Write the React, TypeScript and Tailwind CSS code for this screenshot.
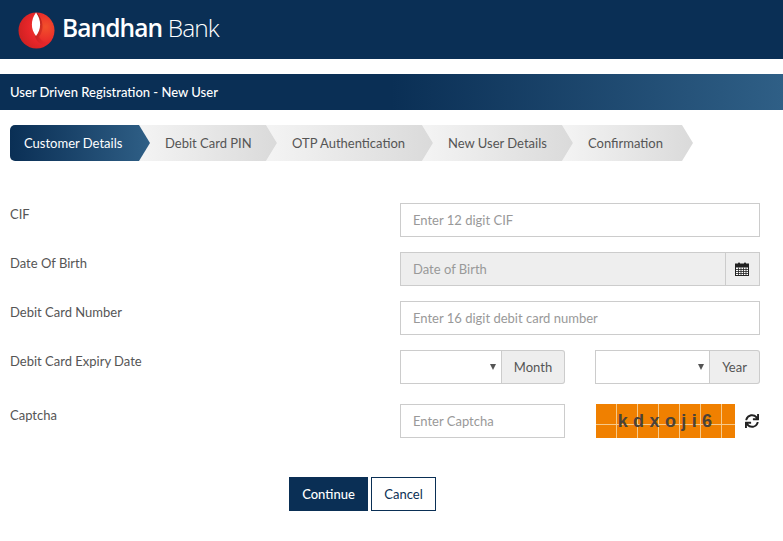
import React from "react";
import { FaSync } from "react-icons/fa";

const font = "font-['Lato','Noto_Sans',sans-serif]";

const steps = [
  { label: "Customer Details", w: "w-[140px]", cls: "pl-[14px] text-white bg-gradient-to-r from-[#0a2f55] to-[#2f5f86] rounded-l-[5px] z-50 [clip-path:polygon(0_0,129px_0,100%_50%,129px_100%,0_100%)]" },
  { label: "Debit Card PIN", w: "w-[138px]", cls: "pl-[26px] text-[#555] bg-gradient-to-r from-[#f4f4f4] to-[#dadada] z-40 [clip-path:polygon(0_0,127px_0,100%_50%,127px_100%,0_100%,11px_50%)] -ml-[11px]" },
  { label: "OTP Authentication", w: "w-[167px]", cls: "pl-[26px] text-[#555] bg-gradient-to-r from-[#f4f4f4] to-[#dadada] z-30 [clip-path:polygon(0_0,156px_0,100%_50%,156px_100%,0_100%,11px_50%)] -ml-[11px]" },
  { label: "New User Details", w: "w-[151px]", cls: "pl-[26px] text-[#555] bg-gradient-to-r from-[#f4f4f4] to-[#dadada] z-20 [clip-path:polygon(0_0,140px_0,100%_50%,140px_100%,0_100%,11px_50%)] -ml-[11px]" },
  { label: "Confirmation", w: "w-[131px]", cls: "pl-[26px] text-[#555] bg-gradient-to-r from-[#f4f4f4] to-[#dadada] z-10 [clip-path:polygon(0_0,120px_0,100%_50%,120px_100%,0_100%,11px_50%)] -ml-[11px]" },
];

const inputCls =
  "h-[34px] w-full border border-[#ccc] bg-white px-3 text-[13px] text-[#555] outline-none placeholder:text-[#999]";

function Label({ children }: { children: React.ReactNode }) {
  return <div className="w-[400px] shrink-0 pl-[10px] pt-[2px] text-[13px] leading-[18px] text-[#555]">{children}</div>;
}

function SelectGroup({ addon, selectW, addonW }: { addon: string; selectW: string; addonW: string }) {
  return (
    <div className="flex h-[34px] w-[165px]">
      <div className={`relative h-full ${selectW}`}>
        <select className="h-full w-full appearance-none border border-[#ccc] bg-white outline-none" aria-label={addon} />
        <span className="absolute right-[6px] top-[14px] h-0 w-0 border-x-[3px] border-t-[6px] border-x-transparent border-t-[#555]" />
      </div>
      <div className={`flex h-full items-center justify-center rounded-r-[3px] border border-l-0 border-[#ccc] bg-[#eee] pt-[1px] text-[13px] text-[#555] ${addonW}`}>
        {addon}
      </div>
    </div>
  );
}

function CalendarIcon() {
  return (
    <svg width="14" height="14" viewBox="0 0 14 14" className="-ml-[1px]">
      <rect x="0.5" y="2" width="13" height="11.5" fill="#fff" stroke="#222" />
      <rect x="0.5" y="2" width="13" height="3.5" fill="#222" />
      <rect x="3" y="0.5" width="2" height="3" rx="0.8" fill="#222" />
      <rect x="9" y="0.5" width="2" height="3" rx="0.8" fill="#222" />
      <path d="M1 7.5H13M1 9.5H13M1 11.5H13M3.5 5.5V13M6 5.5V13M8.5 5.5V13M11 5.5V13" stroke="#222" strokeWidth="0.8" fill="none" />
    </svg>
  );
}

export default function App() {
  return (
    <div className={`${font} h-[541px] w-[783px] overflow-hidden bg-white`}>
      <header className="flex h-[59px] items-center bg-[#0a2f55] pl-[18px]">
        <svg width="37" height="37" viewBox="0 0 37 37" className="mt-[1px] shrink-0">
          <defs>
            <radialGradient id="lg" cx="0.75" cy="0.4" r="0.85">
              <stop offset="0" stopColor="#f2512b" />
              <stop offset="0.55" stopColor="#e8262a" />
              <stop offset="1" stopColor="#c9201f" />
            </radialGradient>
            <linearGradient id="sh" x1="0" y1="0" x2="1" y2="1">
              <stop offset="0" stopColor="#8e1512" />
              <stop offset="1" stopColor="#e8262a" stopOpacity="0" />
            </linearGradient>
          </defs>
          <circle cx="18.5" cy="18.5" r="18" fill="url(#lg)" />
          <path d="M19 1 C25 8 27 17 21 25 C25 30 28 31 31 30 C25 36 18 30 17 24 Z" fill="url(#sh)" />
          <path d="M18 0.5 C12.5 8 12.5 17 18 24 C23.5 17 23.5 8 18 0.5 Z" fill="#fff" />
        </svg>
        <div className="ml-[7px] mt-[-2px] whitespace-nowrap font-['Open_Sans',sans-serif] text-[24.5px] leading-none tracking-[-0.9px] text-white">
          <span className="font-semibold">Bandhan</span> <span className="font-light">Bank</span>
        </div>
      </header>

      <div className="mt-[15px] flex h-[36px] items-center bg-gradient-to-r from-[#0a2f55] via-[#0a2f55] to-[#2f5f86] pl-[10px] pt-[1px] text-[13px] font-medium text-white">
        User Driven Registration - New User
      </div>

      <div className="ml-[10px] mt-[15px] flex h-[36px]">
        {steps.map((s) => (
          <div key={s.label} className={`relative flex h-full items-center whitespace-nowrap pt-[1px] text-[13px] ${s.w} ${s.cls}`}>
            {s.label}
          </div>
        ))}
      </div>

      <form className="mt-[42px] flex flex-col">
        <div className="flex h-[34px]">
          <Label>CIF</Label>
          <div className="w-[360px]"><input className={inputCls} placeholder="Enter 12 digit CIF" /></div>
        </div>

        <div className="mt-[15px] flex h-[34px]">
          <Label>Date Of Birth</Label>
          <div className="flex w-[360px]">
            <input className={`${inputCls} !bg-[#eee]`} placeholder="Date of Birth" disabled />
            <div className="flex h-[34px] w-[34px] shrink-0 items-center justify-center border border-l-0 border-[#ccc] bg-[#eee]">
              <CalendarIcon />
            </div>
          </div>
        </div>

        <div className="mt-[15px] flex h-[34px]">
          <Label>Debit Card Number</Label>
          <div className="w-[360px]"><input className={inputCls} placeholder="Enter 16 digit debit card number" /></div>
        </div>

        <div className="mt-[15px] flex h-[34px]">
          <Label>Debit Card Expiry Date</Label>
          <div className="flex w-[360px] gap-[30px]">
            <SelectGroup addon="Month" selectW="w-[102px]" addonW="w-[63px]" />
            <SelectGroup addon="Year" selectW="w-[115px]" addonW="w-[50px]" />
          </div>
        </div>

        <div className="mt-[20px] flex h-[34px]">
          <Label>Captcha</Label>
          <div className="flex w-[360px] items-center">
            <div className="w-[165px]"><input className={inputCls} placeholder="Enter Captcha" /></div>
            <div className="relative ml-[31px] h-[34px] w-[139px] overflow-hidden">
              <div className="grid h-full grid-cols-[repeat(7,20px)] grid-rows-[20px_13px] gap-[1px] bg-[#f6c98a]">
                {Array.from({ length: 14 }).map((_, i) => (
                  <div key={i} className="bg-[#f08000]" />
                ))}
              </div>
              <div className="absolute inset-0 flex items-center justify-center pr-[1px] font-['Liberation_Sans',sans-serif] text-[18px] font-bold tracking-[0.2px] text-[#4a4238]">
                k d x o j i 6
              </div>
            </div>
            <FaSync size={14} className="ml-[10px] text-[#222]" />
          </div>
        </div>

        <div className="mt-[39px] flex h-[34px] pl-[289px]">
          <button type="button" className="h-full w-[79px] bg-[#0a2f55] pt-[1px] text-[13px] font-medium text-white">Continue</button>
          <button type="button" className="ml-[3px] h-full w-[65px] border border-[#0a2f55] bg-white pt-[1px] text-[13px] text-[#0a2f55]">Cancel</button>
        </div>
      </form>
    </div>
  );
}
